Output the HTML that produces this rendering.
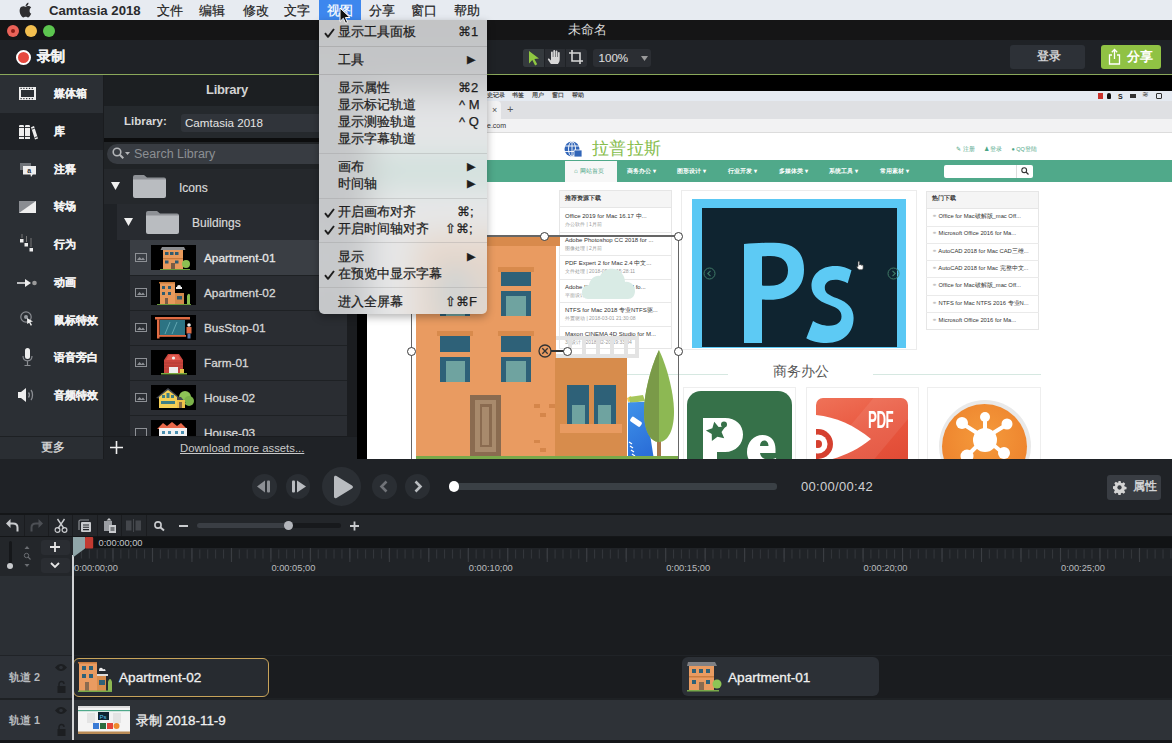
<!DOCTYPE html>
<html><head><meta charset="utf-8">
<style>
*{margin:0;padding:0;box-sizing:border-box}
html,body{width:1172px;height:743px;overflow:hidden;background:#1b1e21;font-family:"Liberation Sans",sans-serif;position:relative}
.a{position:absolute}
.t{position:absolute;white-space:nowrap;line-height:1}
svg{position:absolute;overflow:visible}
</style></head><body>

<!-- ============ mac menubar ============ -->
<div class="a" style="left:0;top:0;width:1172px;height:20px;background:#e7ebf1"></div>
<svg style="left:19px;top:3px" width="13" height="14" viewBox="0 0 13 14"><path fill="#2f2f31" d="M10.6 7.4c0-1.8 1.5-2.7 1.6-2.8-.9-1.3-2.2-1.4-2.7-1.5-1.1-.1-2.2.7-2.8.7-.6 0-1.5-.6-2.4-.6C3 3.2 1.8 3.9 1.2 5.1-.1 7.4.9 10.8 2.1 12.6c.6.9 1.3 1.8 2.3 1.8.9 0 1.2-.6 2.3-.6s1.4.6 2.3.6c1 0 1.6-.9 2.2-1.8.7-1 1-2 1-2.1-.1 0-2-.7-1.6-3.1zM8.8 2c.5-.6.8-1.4.7-2.2-.7 0-1.6.5-2.1 1.1-.5.5-.9 1.4-.8 2.1.8.1 1.7-.4 2.2-1z"/></svg>
<div class="t" style="left:49px;top:4px;font-size:13.2px;font-weight:bold;color:#2a2a2c">Camtasia 2018</div>
<div class="t" style="left:157px;top:3.7px;font-size:13px;color:#222;-webkit-text-stroke:0.2px #222">文件</div>
<div class="t" style="left:199px;top:3.7px;font-size:13px;color:#222;-webkit-text-stroke:0.2px #222">编辑</div>
<div class="t" style="left:242.5px;top:3.7px;font-size:13px;color:#222;-webkit-text-stroke:0.2px #222">修改</div>
<div class="t" style="left:284px;top:3.7px;font-size:13px;color:#222;-webkit-text-stroke:0.2px #222">文字</div>
<div class="a" style="left:319px;top:0;width:42px;height:20px;background:#3d87ee"></div>
<div class="t" style="left:326.5px;top:3.7px;font-size:13px;color:#fff;-webkit-text-stroke:0.2px #fff">视图</div>
<div class="t" style="left:369px;top:3.7px;font-size:13px;color:#222;-webkit-text-stroke:0.2px #222">分享</div>
<div class="t" style="left:411px;top:3.7px;font-size:13px;color:#222;-webkit-text-stroke:0.2px #222">窗口</div>
<div class="t" style="left:454px;top:3.7px;font-size:13px;color:#222;-webkit-text-stroke:0.2px #222">帮助</div>

<!-- ============ title bar ============ -->
<div class="a" style="left:0;top:20px;width:1172px;height:20px;background:#151516"></div>
<div class="a" style="left:7px;top:25px;width:12px;height:12px;border-radius:50%;background:#ea6258"></div>
<div class="a" style="left:11px;top:29px;width:4px;height:4px;border-radius:50%;background:#8c1d16"></div>
<div class="a" style="left:25px;top:25px;width:12px;height:12px;border-radius:50%;background:#f3bf4f"></div>
<div class="a" style="left:43px;top:25px;width:12px;height:12px;border-radius:50%;background:#5cc54f"></div>
<div class="t" style="left:568px;top:24px;font-size:12.5px;color:#d9d9d9">未命名</div>

<!-- ============ toolbar ============ -->
<div class="a" style="left:0;top:40px;width:1172px;height:34px;background:#1f2226"></div>
<div class="a" style="left:16px;top:50px;width:15px;height:15px;border-radius:50%;background:#e6493f;border:2px solid #fff"></div>
<div class="t" style="left:37px;top:50px;font-size:13.5px;font-weight:bold;color:#f2f2f2;-webkit-text-stroke:0.3px #f2f2f2">录制</div>

<div class="a" style="left:523px;top:49px;width:64px;height:18px;border-radius:3px;background:#2b2e33"></div>
<div class="a" style="left:523px;top:49px;width:21px;height:18px;border-radius:3px 0 0 3px;background:#353a3e"></div><div class="a" style="left:544px;top:49px;width:1px;height:18px;background:#1f2226"></div><div class="a" style="left:565px;top:49px;width:1px;height:18px;background:#1f2226"></div>
<svg style="left:527px;top:50px" width="14" height="16" viewBox="0 0 14 16"><path fill="#8fc741" d="M2 1l10 7.5-4.6.6 2.8 5.2-2.1 1.1-2.8-5.3L2 13.5z"/></svg>
<svg style="left:547px;top:49px" width="16" height="17" viewBox="0 0 16 17"><path fill="#d7d7d7" d="M4 15c-1.2-1.6-3-4.3-3-4.3-.5-.8.6-1.6 1.3-.9L4 11.5V3.6c0-.6.4-1 .9-1s.9.4.9 1V8h.5V2c0-.6.4-1 .9-1s.9.4.9 1v6h.5V2.6c0-.6.4-1 .9-1s.9.4.9 1V8h.5V4c0-.6.4-1 .9-1s.9.4.9 1v6.5c0 2-.8 3.4-1.8 4.5z"/></svg>
<svg style="left:568px;top:49px" width="16" height="17" viewBox="0 0 16 17"><path fill="none" stroke="#d7d7d7" stroke-width="1.6" d="M4 1v11h11M1 4h11v11"/></svg>
<div class="a" style="left:593px;top:49px;width:58px;height:18px;border-radius:3px;background:#2b2e33"></div>
<div class="t" style="left:598.5px;top:52px;font-size:11.6px;color:#d8d8d8;-webkit-text-stroke:0.15px #d8d8d8">100%</div>
<svg style="left:641px;top:55.5px" width="7" height="5" viewBox="0 0 7 5"><path fill="#9a9a9a" d="M0 0h7L3.5 5z"/></svg>

<div class="a" style="left:1010px;top:45px;width:75px;height:24px;border-radius:3px;background:#2d3137"></div>
<div class="t" style="left:1036.5px;top:51px;font-size:11.5px;font-weight:bold;color:#cfd0d2">登录</div>
<div class="a" style="left:1101px;top:45px;width:60px;height:24px;border-radius:3px;background:#90c244"></div>
<svg style="left:1108px;top:48px" width="13" height="17" viewBox="0 0 13 17"><path fill="none" stroke="#fff" stroke-width="1.3" d="M4 7H1.5v9h10V7H9M6.5 11V1.5M3.8 4.2l2.7-2.7 2.7 2.7"/></svg>
<div class="t" style="left:1126.5px;top:50px;font-size:13.3px;font-weight:bold;color:#fff">分享</div>
<div class="a" style="left:0;top:74px;width:1172px;height:1px;background:#8aa85a"></div>

<!-- ============ SIDEBAR ============ -->
<div class="a" style="left:0;top:75px;width:104px;height:361px;background:#2b2f34"></div>
<div class="a" style="left:0;top:113px;width:103px;height:37px;background:#1f2226"></div>
<div class="a" style="left:0;top:436px;width:104px;height:23px;background:#2a2e33;border-top:1px solid #1d2023"></div>
<div class="a" style="left:103px;top:75px;width:1px;height:384px;background:#1a1c1f"></div>
<div class="t" style="left:40.5px;top:441.5px;font-size:11.5px;color:#dcdcdc;-webkit-text-stroke:0.35px #dcdcdc">更多</div>
<!-- icons -->
<svg style="left:19px;top:87px" width="17" height="13" viewBox="0 0 17 13"><rect x="0" y="0" width="17" height="13" fill="#eee"/><rect x="2" y="3" width="13" height="7" fill="#2b2f34"/><g fill="#2b2f34"><rect x="1.5" y="0.8" width="1.2" height="1.2"/><rect x="4.3" y="0.8" width="1.2" height="1.2"/><rect x="7.1" y="0.8" width="1.2" height="1.2"/><rect x="9.9" y="0.8" width="1.2" height="1.2"/><rect x="12.7" y="0.8" width="1.2" height="1.2"/><rect x="1.5" y="11" width="1.2" height="1.2"/><rect x="4.3" y="11" width="1.2" height="1.2"/><rect x="7.1" y="11" width="1.2" height="1.2"/><rect x="9.9" y="11" width="1.2" height="1.2"/><rect x="12.7" y="11" width="1.2" height="1.2"/></g></svg>
<svg style="left:18px;top:124px" width="20" height="16" viewBox="0 0 20 16"><path fill="#eee" d="M1 2.2Q1 1 2.2 1h2.6Q6 1 6 2.2V15H1zM7 2.2Q7 1 8.2 1h2.6Q12 1 12 2.2V15H7zM13 3.2l3-1.2 4 12.4-3 1.2z"/><path stroke="#1f2226" stroke-width="0.9" d="M1 3.5h5M1 12.5h5M7 3.5h5M7 12.5h5M13.8 5.2l3-1M16.6 13.6l3-1"/></svg>
<svg style="left:19px;top:162px" width="18" height="16" viewBox="0 0 18 16"><rect x="1" y="1" width="11" height="7" fill="#6f7378"/><path fill="#eee" d="M4 4h13v8.5h-3.2l-1.8 2.5-.5-2.5H4z"/><text x="8.3" y="11" font-size="7" font-family="Liberation Sans" font-weight="bold" fill="#2b2f34">a</text></svg>
<svg style="left:19px;top:201px" width="17" height="12" viewBox="0 0 17 12"><path fill="#eee" d="M0 0h17v12H0z"/><path fill="#8a8d92" d="M0 0h17L0 12z"/></svg>
<svg style="left:20px;top:234px" width="14" height="20" viewBox="0 0 14 20"><path fill="#eee" d="M0 5h3.5v3.5H0zM4.5 9h3.5v3.5H4.5zM9.5 14h3.5v3.5H9.5z"/><path stroke="#777" stroke-width="1" d="M2 0v4M6.5 2v6M11 4v9"/></svg>
<svg style="left:17px;top:279px" width="21" height="8" viewBox="0 0 21 8"><path fill="#eee" d="M0 3.2h8V0l6 4-6 4V4.8H0z"/><circle cx="17.5" cy="4" r="2.3" fill="#9a9a9a"/></svg>
<svg style="left:20px;top:311px" width="14" height="16" viewBox="0 0 14 16"><circle cx="6" cy="6" r="5.2" fill="none" stroke="#8a8d92" stroke-width="1.2"/><circle cx="6" cy="6" r="2" fill="#9a9da2"/><path fill="#eee" d="M7 7l6 3.5-2.6.5 1.6 3-1.2.7-1.6-3L7.2 13z"/></svg>
<svg style="left:22px;top:348px" width="11" height="19" viewBox="0 0 11 19"><rect x="3" y="0" width="5" height="11" rx="2.5" fill="#eee"/><path fill="none" stroke="#8a8d92" stroke-width="1.2" d="M1 8c0 3 2 4.8 4.5 4.8S10 11 10 8M5.5 13v4M2.5 17.5h6"/></svg>
<svg style="left:17px;top:387px" width="19" height="16" viewBox="0 0 19 16"><path fill="#eee" d="M1 5h3l5-4v14l-5-4H1z"/><path fill="none" stroke="#8a8d92" stroke-width="1.3" d="M11.5 5.5c1 1.3 1 3.7 0 5M14 3c2 2.5 2 7.5 0 10"/></svg>
<div class="t" style="left:54px;top:87.5px;font-size:11.2px;font-weight:bold;color:#f2f2f2;-webkit-text-stroke:0.2px #f2f2f2">媒体箱</div>
<div class="t" style="left:54px;top:125.5px;font-size:11.2px;font-weight:bold;color:#f2f2f2;-webkit-text-stroke:0.2px #f2f2f2">库</div>
<div class="t" style="left:54px;top:163.5px;font-size:11.2px;font-weight:bold;color:#f2f2f2;-webkit-text-stroke:0.2px #f2f2f2">注释</div>
<div class="t" style="left:54px;top:200.5px;font-size:11.2px;font-weight:bold;color:#f2f2f2;-webkit-text-stroke:0.2px #f2f2f2">转场</div>
<div class="t" style="left:54px;top:238.5px;font-size:11.2px;font-weight:bold;color:#f2f2f2;-webkit-text-stroke:0.2px #f2f2f2">行为</div>
<div class="t" style="left:54px;top:276.5px;font-size:11.2px;font-weight:bold;color:#f2f2f2;-webkit-text-stroke:0.2px #f2f2f2">动画</div>
<div class="t" style="left:54px;top:314.5px;font-size:11.2px;font-weight:bold;color:#f2f2f2;-webkit-text-stroke:0.2px #f2f2f2">鼠标特效</div>
<div class="t" style="left:54px;top:351.5px;font-size:11.2px;font-weight:bold;color:#f2f2f2;-webkit-text-stroke:0.2px #f2f2f2">语音旁白</div>
<div class="t" style="left:54px;top:389.5px;font-size:11.2px;font-weight:bold;color:#f2f2f2;-webkit-text-stroke:0.2px #f2f2f2">音频特效</div>

<!-- ============ LIBRARY ============ -->
<div class="a" style="left:104px;top:75px;width:253px;height:31px;background:#1c1f22"></div>
<div class="t" style="left:206px;top:83px;font-size:13px;font-weight:bold;color:#d2d2d2;letter-spacing:-0.3px">Library</div>
<div class="a" style="left:104px;top:106px;width:253px;height:32px;background:#25292d"></div>
<div class="t" style="left:124px;top:116px;font-size:11.5px;font-weight:bold;color:#d8d8d8">Library:</div>
<div class="a" style="left:181px;top:114px;width:170px;height:18px;border-radius:3px;background:#30343a"></div>
<div class="t" style="left:185px;top:117px;font-size:11.6px;color:#e4e4e4">Camtasia 2018</div>
<div class="a" style="left:104px;top:138px;width:253px;height:4px;background:#0c0d0e"></div>
<div class="a" style="left:104px;top:142px;width:253px;height:27px;background:#202326"></div>
<div class="a" style="left:107px;top:144px;width:246px;height:20px;border-radius:10px;background:#383c42"></div>
<svg style="left:112px;top:147px" width="20" height="13" viewBox="0 0 20 13"><circle cx="5" cy="5" r="3.8" fill="none" stroke="#b4b6b9" stroke-width="1.6"/><path stroke="#b4b6b9" stroke-width="2" d="M7.8 7.8l3.5 3.5"/><path fill="#b4b6b9" d="M13 5h5l-2.5 3z"/></svg>
<div class="t" style="left:134px;top:148px;font-size:12.5px;color:#8c8f93">Search Library</div>
<!-- Icons row -->
<div class="a" style="left:104px;top:169px;width:253px;height:35px;background:#25282c"></div>
<svg style="left:111px;top:182px" width="9" height="8" viewBox="0 0 9 8"><path fill="#f0f0f0" d="M0 0h9L4.5 8z"/></svg>
<svg style="left:133px;top:175px" width="33" height="23" viewBox="0 0 33 23"><path fill="#8e9196" d="M0 2a2 2 0 012-2h9l3 2.5h17a2 2 0 012 2V6H0z"/><path fill="#b9bcc0" d="M0 4.5h33V21a2 2 0 01-2 2H2a2 2 0 01-2-2z"/></svg>
<div class="t" style="left:179px;top:181.5px;font-size:12px;color:#d8d8d8;-webkit-text-stroke:0.2px #d8d8d8">Icons</div>
<!-- Buildings row -->
<div class="a" style="left:104px;top:204px;width:13px;height:232px;background:#1f2226"></div>
<div class="a" style="left:117px;top:204px;width:240px;height:36px;background:#282b30"></div>
<svg style="left:124px;top:218px" width="9" height="8" viewBox="0 0 9 8"><path fill="#f0f0f0" d="M0 0h9L4.5 8z"/></svg>
<svg style="left:146px;top:211px" width="33" height="23" viewBox="0 0 33 23"><path fill="#8e9196" d="M0 2a2 2 0 012-2h9l3 2.5h17a2 2 0 012 2V6H0z"/><path fill="#b9bcc0" d="M0 4.5h33V21a2 2 0 01-2 2H2a2 2 0 01-2-2z"/></svg>
<div class="t" style="left:192px;top:216.5px;font-size:12px;color:#d8d8d8;-webkit-text-stroke:0.2px #d8d8d8">Buildings</div>
<div class="a" style="left:117px;top:240px;width:13px;height:196px;background:#1f2226"></div>
<div class="a" style="left:347px;top:240px;width:10px;height:196px;background:#1b1d20"></div>
<!-- list rows -->
<div class="a" style="left:130px;top:240px;width:217px;height:35px;background:#3a3e44"></div>
<div class="a" style="left:130px;top:275px;width:217px;height:161px;background:#2a2d32"></div>
<div class="a" style="left:130px;top:275px;width:217px;height:1px;background:#1e2124"></div>
<div class="a" style="left:130px;top:310px;width:217px;height:1px;background:#1e2124"></div>
<div class="a" style="left:130px;top:345px;width:217px;height:1px;background:#1e2124"></div>
<div class="a" style="left:130px;top:380px;width:217px;height:1px;background:#1e2124"></div>
<div class="a" style="left:130px;top:415px;width:217px;height:1px;background:#1e2124"></div>
<!-- small image icons -->
<svg style="left:135px;top:253px" width="12" height="9" viewBox="0 0 12 9"><rect x="0.5" y="0.5" width="11" height="8" fill="none" stroke="#8d9095"/><path fill="#8d9095" d="M2 7l2.5-3 2 2 1.5-1.5L10 7z"/></svg>
<svg style="left:135px;top:288px" width="12" height="9" viewBox="0 0 12 9"><rect x="0.5" y="0.5" width="11" height="8" fill="none" stroke="#8d9095"/><path fill="#8d9095" d="M2 7l2.5-3 2 2 1.5-1.5L10 7z"/></svg>
<svg style="left:135px;top:323px" width="12" height="9" viewBox="0 0 12 9"><rect x="0.5" y="0.5" width="11" height="8" fill="none" stroke="#8d9095"/><path fill="#8d9095" d="M2 7l2.5-3 2 2 1.5-1.5L10 7z"/></svg>
<svg style="left:135px;top:358px" width="12" height="9" viewBox="0 0 12 9"><rect x="0.5" y="0.5" width="11" height="8" fill="none" stroke="#8d9095"/><path fill="#8d9095" d="M2 7l2.5-3 2 2 1.5-1.5L10 7z"/></svg>
<svg style="left:135px;top:393px" width="12" height="9" viewBox="0 0 12 9"><rect x="0.5" y="0.5" width="11" height="8" fill="none" stroke="#8d9095"/><path fill="#8d9095" d="M2 7l2.5-3 2 2 1.5-1.5L10 7z"/></svg>
<svg style="left:135px;top:428px" width="12" height="8" viewBox="0 0 12 8"><rect x="0.5" y="0.5" width="11" height="8" fill="none" stroke="#8d9095"/></svg>
<!-- thumbs -->
<svg style="left:151px;top:245px" width="45" height="25" viewBox="0 0 45 25"><rect width="45" height="25" fill="#000"/><path fill="#8b8d90" d="M11 2h22l1.5 3h-25z"/><rect x="12" y="5" width="20" height="19" fill="#e89a5c"/><rect x="12" y="13" width="20" height="1.2" fill="#c77a3c"/><g fill="#2f5b70"><rect x="14" y="7" width="3.5" height="3"/><rect x="19" y="7" width="3.5" height="3"/><rect x="24" y="7" width="3.5" height="3"/><rect x="14" y="15.5" width="3.5" height="3"/><rect x="24" y="15.5" width="3.5" height="3"/></g><rect x="20" y="18" width="4" height="6" fill="#7a5c45"/><circle cx="35" cy="19" r="4" fill="#8cbf52"/><rect x="9" y="24" width="30" height="1" fill="#6a9b3a"/></svg>
<svg style="left:151px;top:280px" width="45" height="25" viewBox="0 0 45 25"><rect width="45" height="25" fill="#000"/><rect x="9" y="3" width="15" height="21" fill="#e89a5c"/><rect x="8" y="2" width="16" height="1.5" fill="#c77a3c"/><g fill="#2f5b70"><rect x="11" y="6" width="3" height="3"/><rect x="17" y="6" width="3" height="3"/><rect x="11" y="12" width="3" height="3"/><rect x="17" y="12" width="3" height="3"/></g><rect x="14" y="18" width="3" height="6" fill="#7a5c45"/><rect x="24" y="13" width="9" height="11" fill="#d38a4c"/><rect x="26" y="16" width="5" height="3.5" fill="#2f5b70"/><path fill="#eee" d="M26 7a2 2 0 014 0h1v2h-6V7z"/><path fill="#8cbf52" d="M36 24V16c1-3 3-3 3 0v8z"/><rect x="6" y="24" width="34" height="1" fill="#6a9b3a"/></svg>
<svg style="left:151px;top:315px" width="45" height="25" viewBox="0 0 45 25"><rect width="45" height="25" fill="#000"/><rect x="4" y="2" width="35" height="2.5" fill="#e06c44"/><rect x="6" y="4.5" width="2.5" height="19" fill="#e06c44"/><rect x="9" y="5" width="25" height="15" fill="#2c7383"/><path stroke="#6fb3bd" stroke-width="0.8" d="M14 19l5-12M21 19l5-12"/><rect x="7" y="20" width="28" height="1.8" fill="#e06c44"/><circle cx="38" cy="10" r="1.8" fill="#eee"/><rect x="35.5" y="12" width="5" height="6.5" fill="#e06c44"/><rect x="36.5" y="18.5" width="3" height="5" fill="#5577aa"/></svg>
<svg style="left:151px;top:350px" width="45" height="25" viewBox="0 0 45 25"><rect width="45" height="25" fill="#000"/><path fill="#c9453d" d="M13 10l4-6h11l4 6v13H13z"/><path fill="#e25a4e" d="M15 10l3-5h9l3 5z"/><circle cx="22.5" cy="8" r="1.6" fill="#eee"/><g stroke="#a33a33" stroke-width="0.6"><path d="M13 13h19M13 16h19M13 19h19"/></g><rect x="18" y="17" width="9" height="6" fill="#eee"/><rect x="29" y="19" width="4" height="4" fill="#e8c34a"/><rect x="10" y="23" width="26" height="1.5" fill="#7aaa42"/></svg>
<svg style="left:151px;top:385px" width="45" height="25" viewBox="0 0 45 25"><rect width="45" height="25" fill="#000"/><circle cx="34" cy="12" r="6" fill="#8ec456"/><circle cx="38" cy="16" r="5" fill="#7cb34a"/><path fill="#454a52" d="M5 13L17 3l11 9h2l5 6h-3z"/><path fill="#f4cf55" d="M8 12l9-7 9 7v11H8z"/><rect x="26" y="15" width="8" height="8" fill="#f0c24a"/><g fill="#3f7f86"><rect x="11" y="10" width="3" height="3"/><rect x="15.5" y="8" width="3" height="5"/><rect x="20" y="10" width="3" height="3"/><rect x="10" y="16" width="14" height="3"/></g><rect x="28" y="17" width="3" height="6" fill="#876c48"/></svg>
<svg style="left:151px;top:420px" width="45" height="16" viewBox="0 0 45 16"><rect width="45" height="16" fill="#000"/><path fill="#e8684a" d="M6 9l6-6 4 3 5-4 5 4 4-3 6 6z"/><rect x="8" y="8" width="28" height="8" fill="#f2f2f2"/><g fill="#4a8fb0"><rect x="11" y="11" width="3" height="3"/><rect x="17" y="11" width="3" height="3"/><rect x="24" y="11" width="3" height="3"/><rect x="30" y="11" width="3" height="3"/></g></svg>
<div class="t" style="left:204px;top:252.5px;font-size:11.8px;color:#e6e6e6;-webkit-text-stroke:0.3px #e6e6e6">Apartment-01</div>
<div class="t" style="left:204px;top:287.5px;font-size:11.8px;color:#d6d6d6;-webkit-text-stroke:0.3px #d6d6d6">Apartment-02</div>
<div class="t" style="left:204px;top:322.5px;font-size:11.8px;color:#d6d6d6;-webkit-text-stroke:0.3px #d6d6d6">BusStop-01</div>
<div class="t" style="left:204px;top:357.5px;font-size:11.8px;color:#d6d6d6;-webkit-text-stroke:0.3px #d6d6d6">Farm-01</div>
<div class="t" style="left:204px;top:392.5px;font-size:11.8px;color:#d6d6d6;-webkit-text-stroke:0.3px #d6d6d6">House-02</div>
<div class="a" style="left:204px;top:426px;height:10px;width:80px;overflow:hidden"><div class="t" style="left:0;top:1.5px;font-size:11.8px;color:#d6d6d6;-webkit-text-stroke:0.3px #d6d6d6">House-03</div></div>
<!-- bottom bar -->
<div class="a" style="left:104px;top:436px;width:253px;height:23px;background:#1f2226;border-top:1px solid #1a1c1f"></div>
<svg style="left:110px;top:441px" width="13" height="13" viewBox="0 0 13 13"><path stroke="#eee" stroke-width="1.6" d="M6.5 0v13M0 6.5h13"/></svg>
<div class="t" style="left:180px;top:442.5px;font-size:11.3px;color:#c9c9c9;text-decoration:underline">Download more assets...</div>

<!-- LIBRARY -->
<!-- ============ CANVAS ============ -->
<div class="a" style="left:357px;top:75px;width:815px;height:384px;background:#000"></div>
<div class="a" style="left:367px;top:91px;width:805px;height:368px;background:#fff;overflow:hidden">
 <!-- inner coords: x-367, y-91 -->
 <div class="a" style="left:0;top:0;width:805px;height:9.5px;background:#e5eaf1"></div>
 <div class="t" style="left:120px;top:2px;font-size:5.8px;color:#333;-webkit-text-stroke:0.15px #333">史记录</div>
 <div class="t" style="left:145px;top:2px;font-size:5.8px;color:#333;-webkit-text-stroke:0.15px #333">书签</div>
 <div class="t" style="left:165px;top:2px;font-size:5.8px;color:#333;-webkit-text-stroke:0.15px #333">用户</div>
 <div class="t" style="left:184.70000000000005px;top:2px;font-size:5.8px;color:#333;-webkit-text-stroke:0.15px #333">窗口</div>
 <div class="t" style="left:204.60000000000002px;top:2px;font-size:5.8px;color:#333;-webkit-text-stroke:0.15px #333">帮助</div>

 <div class="a" style="left:731px;top:2px;width:5px;height:6px;background:#c8302a"></div>
 <div class="a" style="left:740px;top:2px;width:4px;height:6px;border-radius:2px 2px 1px 1px;background:#111"></div>
 <div class="t" style="left:751px;top:1.5px;font-size:7px;font-weight:bold;color:#222">S</div>
 <div class="a" style="left:763px;top:3px;width:6px;height:4px;background:#333"></div>
 <div class="t" style="left:775px;top:0px;font-size:8px;color:#444">≋</div>
 <div class="a" style="left:789px;top:2px;width:6px;height:6px;border:1.2px solid #333;border-radius:1px"></div>
 <div class="a" style="left:0;top:9.5px;width:805px;height:18px;background:#dfe0e3"></div>
 <div class="a" style="left:0;top:10px;width:134px;height:17.5px;background:#f2f2f3;border-radius:0 4px 0 0"></div>
 <div class="t" style="left:125px;top:14.5px;font-size:9px;color:#555">×</div>
 <div class="t" style="left:140px;top:13px;font-size:11px;color:#555">+</div>
 <div class="a" style="left:0;top:27.5px;width:805px;height:13px;background:#f2f2f3"></div>
 <div class="t" style="left:120px;top:30.5px;font-size:7px;color:#333">e.com</div>
 <div class="a" style="left:0;top:40.5px;width:805px;height:1.5px;background:#dcdcdc"></div>

 <!-- logo -->
 <svg style="left:197px;top:50px" width="18" height="16" viewBox="0 0 18 16"><circle cx="8" cy="8" r="7.5" fill="#3165b8"/><g stroke="#fff" stroke-width="0.9" fill="none"><ellipse cx="8" cy="8" rx="3.5" ry="7.5"/><path d="M0.5 5h15M0.5 10.5h15M8 0.5v15"/></g><rect x="10" y="9" width="8" height="7" fill="#3165b8" stroke="#fff" stroke-width="0.8"/></svg>
 <div class="t" style="left:225px;top:48.5px;font-size:17px;color:#86bd4c;font-family:'Liberation Serif',serif;letter-spacing:0.3px">拉普拉斯</div>
 <div class="t" style="left:589px;top:56px;font-size:5.5px;color:#4aa585">✎ 注册&nbsp;&nbsp;&nbsp;&nbsp;&nbsp;&nbsp;♟ 登录&nbsp;&nbsp;&nbsp;&nbsp;&nbsp;&nbsp;● QQ登陆</div>

 <!-- nav -->
 <div class="a" style="left:0;top:68.5px;width:805px;height:22px;background:#50a98a"></div>
 <div class="a" style="left:198px;top:70px;width:52px;height:20.5px;background:#f7f7f7"></div>
 <div class="t" style="left:207px;top:76.5px;font-size:6.3px;color:#4aa585">⌂ 网站首页</div>
 <div class="t" style="left:260px;top:76.5px;font-size:6.3px;font-weight:bold;color:#fff">商务办公 ▾</div>
 <div class="t" style="left:310px;top:76.5px;font-size:6.3px;font-weight:bold;color:#fff">图形设计 ▾</div>
 <div class="t" style="left:361px;top:76.5px;font-size:6.3px;font-weight:bold;color:#fff">行业开发 ▾</div>
 <div class="t" style="left:412px;top:76.5px;font-size:6.3px;font-weight:bold;color:#fff">多媒体类 ▾</div>
 <div class="t" style="left:462px;top:76.5px;font-size:6.3px;font-weight:bold;color:#fff">系统工具 ▾</div>
 <div class="t" style="left:513px;top:76.5px;font-size:6.3px;font-weight:bold;color:#fff">常用素材 ▾</div>
 <div class="a" style="left:577px;top:73.5px;width:89px;height:13px;background:#fff;border-radius:2px"></div>
 <div class="a" style="left:649px;top:73.5px;width:1px;height:13px;background:#ddd"></div>
 <svg style="left:654px;top:76px" width="8" height="8" viewBox="0 0 8 8"><circle cx="3.2" cy="3.2" r="2.4" fill="none" stroke="#333" stroke-width="1.1"/><path stroke="#333" stroke-width="1.3" d="M5 5l2.5 2.5"/></svg>

 <!-- 推荐资源下载 -->
 <div class="a" style="left:192px;top:99px;width:113px;height:159px;border:1px solid #e6e6e6;background:#fff"></div>
 <div class="a" style="left:192px;top:99px;width:113px;height:18px;background:#f5f5f5;border:1px solid #e6e6e6"></div>
 <div class="t" style="left:198px;top:105px;font-size:5.8px;font-weight:bold;color:#333">推荐资源下载</div>
 <div class="a" style="left:192px;top:140.5px;width:113px;height:1px;background:#e8e8e8"></div>
 <div class="a" style="left:192px;top:164px;width:113px;height:1px;background:#e8e8e8"></div>
 <div class="a" style="left:192px;top:187.5px;width:113px;height:1px;background:#e8e8e8"></div>
 <div class="a" style="left:192px;top:211px;width:113px;height:1px;background:#e8e8e8"></div>
 <div class="a" style="left:192px;top:234.5px;width:113px;height:1px;background:#e8e8e8"></div>
 <div class="t" style="left:198px;top:122px;font-size:6px;color:#333">Office 2019 for Mac 16.17 中...</div>
 <div class="t" style="left:198px;top:131px;font-size:5px;color:#9a9a9a">办公软件 | 1月前</div>
 <div class="t" style="left:198px;top:145.5px;font-size:6px;color:#333">Adobe Photoshop CC 2018 for ...</div>
 <div class="t" style="left:198px;top:154.5px;font-size:5px;color:#9a9a9a">图像处理 | 2月前</div>
 <div class="t" style="left:198px;top:169px;font-size:6px;color:#333">PDF Expert 2 for Mac 2.4 中文...</div>
 <div class="t" style="left:198px;top:178px;font-size:5px;color:#9a9a9a">文件处理 | 2018-05-03 15:28:11</div>
 <div class="t" style="left:198px;top:192.5px;font-size:6px;color:#333">Adobe Illustrator CC 2018 fo...</div>
 <div class="t" style="left:198px;top:201.5px;font-size:5px;color:#9a9a9a">平面设计 | 2018-04-19 12</div>
 <div class="t" style="left:198px;top:216px;font-size:6px;color:#333">NTFS for Mac 2018 专业NTFS驱...</div>
 <div class="t" style="left:198px;top:225px;font-size:5px;color:#9a9a9a">外置驱动 | 2018-03-01 21:30:08</div>
 <div class="t" style="left:198px;top:239.5px;font-size:6px;color:#333">Maxon CINEMA 4D Studio for M...</div>
 <div class="t" style="left:198px;top:248.5px;font-size:5px;color:#9a9a9a">3D设计 | 2018-02-20 19:33:04</div>

 <!-- PS carousel -->
 <div class="a" style="left:313.5px;top:99px;width:236px;height:160px;border:1px solid #ececec"></div>
 <div class="a" style="left:325px;top:108px;width:214px;height:148.5px;background:#5ac8f4"></div>
 <div class="a" style="left:334.5px;top:116.5px;width:195px;height:139.5px;background:#0f2430"></div>
 <svg style="left:374px;top:152px" width="116" height="102" viewBox="0 0 116 102"><path fill="#5dcaf4" d="M3 1c10-1 22-1.3 30-1.3 22 0 30 11 30 27 0 20-15 30-34 30-3.5 0-5.5 0-8-.2V100H3zM21 42.5c2 .2 4 .3 7.5.3 13 0 18.5-6 18.5-15.5C47 18 41 13 29.5 13c-4 0-7 .2-8.5.5z"/><path fill="#5dcaf4" d="M72 78c3.5 2.3 10 4.8 16 4.8 8.5 0 12.5-4 12.5-9.2 0-5.6-3.4-8.5-12-11.5C76 57.7 70.5 51 70.5 43c0-11 9-20 23.5-20 6.8 0 12.8 2 16.5 4.3l-3.8 13c-2.6-1.6-7.5-3.6-12.5-3.6-6.8 0-10.4 3.4-10.4 8 0 5 3.6 7.3 12.3 10.6 11.2 4.2 16.5 10.6 16.5 19.8C112.6 89 102.9 100 85.5 100c-8 0-15.4-2-20.2-4.8z"/></svg>
 <svg style="left:336px;top:176px" width="13" height="13" viewBox="0 0 13 13"><circle cx="6.5" cy="6.5" r="5.5" fill="none" stroke="#3f7a66" stroke-width="1"/><path fill="none" stroke="#3f7a66" stroke-width="1.2" d="M7.5 3.8L4.8 6.5l2.7 2.7"/></svg>
 <svg style="left:520px;top:176px" width="13" height="13" viewBox="0 0 13 13"><circle cx="6.5" cy="6.5" r="5.5" fill="none" stroke="#3f7a66" stroke-width="1"/><path fill="none" stroke="#3f7a66" stroke-width="1.2" d="M5.5 3.8l2.7 2.7-2.7 2.7"/></svg>
 <svg style="left:489px;top:170px" width="8" height="9" viewBox="0 0 8 9"><path fill="#fff" stroke="#333" stroke-width="0.7" d="M2 4V1a.8.8 0 011.6 0v3h.5a.8.8 0 011.5.3h.2a.8.8 0 011.4.5V7c0 1-1 1.8-2 1.8H3.5C2.7 8.8 1 7 .8 6c-.2-.7.5-1 1.2-.3z"/></svg>

 <!-- 热门下载 -->
 <div class="a" style="left:558.5px;top:99.5px;width:113px;height:139px;border:1px solid #e6e6e6;background:#fff"></div>
 <div class="a" style="left:558.5px;top:99.5px;width:113px;height:18px;background:#f5f5f5;border:1px solid #e6e6e6"></div>
 <div class="t" style="left:565px;top:105px;font-size:5.8px;font-weight:bold;color:#333">热门下载</div>
 <div class="a" style="left:558.5px;top:134.5px;width:113px;height:1px;background:#eaeaea"></div>
 <div class="a" style="left:558.5px;top:151.8px;width:113px;height:1px;background:#eaeaea"></div>
 <div class="a" style="left:558.5px;top:169px;width:113px;height:1px;background:#eaeaea"></div>
 <div class="a" style="left:558.5px;top:186.3px;width:113px;height:1px;background:#eaeaea"></div>
 <div class="a" style="left:558.5px;top:203.6px;width:113px;height:1px;background:#eaeaea"></div>
 <div class="a" style="left:558.5px;top:221px;width:113px;height:1px;background:#eaeaea"></div>
 <div class="t" style="left:565px;top:123px;font-size:5.8px;color:#333"><span style="color:#bbb">⚭</span> Office for Mac破解版_mac Off...</div>
 <div class="t" style="left:565px;top:140px;font-size:5.8px;color:#333"><span style="color:#bbb">⚭</span> Microsoft Office 2016 for Ma...</div>
 <div class="t" style="left:565px;top:157.5px;font-size:5.8px;color:#333"><span style="color:#bbb">⚭</span> AutoCAD 2018 for Mac CAD三维...</div>
 <div class="t" style="left:565px;top:175px;font-size:5.8px;color:#333"><span style="color:#bbb">⚭</span> AutoCAD 2018 for Mac 完整中文...</div>
 <div class="t" style="left:565px;top:192px;font-size:5.8px;color:#333"><span style="color:#bbb">⚭</span> Office for Mac破解版_mac Off...</div>
 <div class="t" style="left:565px;top:209.5px;font-size:5.8px;color:#333"><span style="color:#bbb">⚭</span> NTFS for Mac NTFS 2016 专业N...</div>
 <div class="t" style="left:565px;top:227px;font-size:5.8px;color:#333"><span style="color:#bbb">⚭</span> Microsoft Office 2016 for Ma...</div>

 <!-- 商务办公 -->
 <div class="a" style="left:195px;top:282.5px;width:166px;height:1.5px;background:#d6e8e1"></div>
 <div class="a" style="left:506px;top:282.5px;width:168px;height:1.5px;background:#d6e8e1"></div>
 <div class="t" style="left:406px;top:274px;font-size:13.5px;color:#555">商务办公</div>
 <div class="a" style="left:316px;top:296px;width:113px;height:80px;border:1px solid #eee"></div>
 <div class="a" style="left:438.5px;top:296px;width:113px;height:80px;border:1px solid #eee"></div>
 <div class="a" style="left:560px;top:296px;width:114px;height:80px;border:1px solid #eee"></div>
 <!-- Pe -->
 <div class="a" style="left:320px;top:300px;width:105px;height:100px;border-radius:14px;background:#367149"></div>
 <svg style="left:336px;top:326.5px" width="80" height="50" viewBox="0 0 80 50"><path fill="#fff" d="M0 0h22c11 0 18 7 18 16.5S33 34 22 34h-8v16H0z"/><path fill="#367149" d="M13 3.5l3.2 6 6.8 1-5 4.6 1.3 6.7L13 18.8l-6.3 3 1.3-6.7-5-4.6 6.8-1z" transform="rotate(-12 13 12)"/><circle cx="21" cy="6.5" r="3" fill="#367149"/><path fill="#fff" fill-rule="evenodd" d="M44 34c0-10 7-17 15.5-17 8 0 13 5.5 13 14v4H57c.7 4.5 4 6.5 8.5 6.5 3 0 5.8-.7 7.5-1.5l1.5 8.5C72 49.5 68 50.3 64 50.3 52 50.3 44 43.8 44 34zM57 28h8.5c0-3-1.5-5.5-4.2-5.5S57 25 57 28z"/></svg>
 <!-- PDF -->
 <div class="a" style="left:449px;top:307px;width:92px;height:80px;border-radius:7px;overflow:hidden;background:linear-gradient(160deg,#ef7258 0%,#e9573f 45%,#dc4631 100%)"><div class="a" style="left:30px;top:-40px;width:40px;height:160px;background:rgba(255,255,255,0.08);transform:rotate(40deg)"></div><svg style="left:0;top:15px" width="60" height="50" viewBox="0 0 60 50"><path fill="#fff" d="M0 2c20 2 38 10 55 24C38 40 20 46 0 50z"/><circle cx="2" cy="31" r="15" fill="#d5402f"/><circle cx="2" cy="31" r="9.5" fill="#fff"/><circle cx="2" cy="31" r="4" fill="#d5402f"/></svg><div class="t" style="left:51.5px;top:10.5px;font-size:14.5px;font-weight:bold;color:#fff;letter-spacing:-0.5px;transform:scaleX(0.92) scaleY(1.6);transform-origin:0 0">PDF</div></div>
 <!-- orange -->
 <div class="a" style="left:571.5px;top:309px;width:92px;height:92px;border-radius:50%;background:#e9e9e9"></div>
 <div class="a" style="left:575px;top:312.5px;width:85px;height:85px;border-radius:50%;background:radial-gradient(circle at 50% 40%,#f59b3c,#ea7a28)"></div>
 <svg style="left:583px;top:320px" width="70" height="52" viewBox="0 0 70 52"><g stroke="#fff" stroke-width="4" stroke-linecap="round"><path d="M35 27L13 13M35 27L35 6M35 27L56 14M35 27L18 44M35 27L53 42"/></g><circle cx="35" cy="29" r="12" fill="#fff"/><circle cx="12" cy="12" r="6" fill="#fff"/><circle cx="35" cy="6" r="5" fill="#fff"/><circle cx="57" cy="13" r="5.5" fill="#fff"/><circle cx="17" cy="45" r="6.5" fill="#fff"/><circle cx="54" cy="42" r="6" fill="#fff"/></svg>

 <!-- cloud -->
 <svg style="left:215px;top:177px" width="56" height="32" viewBox="0 0 56 32"><path fill="#d9ebe5" d="M6 31c-4 0-6-3-6-7s3-7 7-7c1-6 6-10 11-9 3-6 9-8 14-7 7 1 11 7 11 13 5-1 10 3 10 9 0 5-3 8-7 8z"/></svg>
 <!-- balcony railing -->
 <div class="a" style="left:188px;top:245px;width:84px;height:22px;border:4px solid #e3e3e3;border-left:none"></div>
 <div class="a" style="left:201px;top:245px;width:3.5px;height:22px;background:#e3e3e3"></div>
 <div class="a" style="left:215px;top:245px;width:3.5px;height:22px;background:#e3e3e3"></div>
 <div class="a" style="left:229px;top:245px;width:3.5px;height:22px;background:#e3e3e3"></div>
 <div class="a" style="left:243px;top:245px;width:3.5px;height:22px;background:#e3e3e3"></div>
 <div class="a" style="left:257px;top:245px;width:3.5px;height:22px;background:#e3e3e3"></div>
</div>
<div class="a" style="left:367px;top:91px;width:805px;height:368px;overflow:hidden">
 <div class="a" style="left:49px;top:145px;width:144px;height:10px;background:#d88a4c"></div>
 <div class="a" style="left:49px;top:154.5px;width:139.5px;height:214px;background:#e99b61"></div>
 <!-- row1 windows -->
 <div class="a" style="left:70px;top:176px;width:36px;height:5px;background:#d88a4c"></div>
 <div class="a" style="left:130.5px;top:176px;width:36px;height:5px;background:#d88a4c"></div>
 <div class="a" style="left:73px;top:181px;width:30px;height:14px;background:#2e6178"></div>
 <div class="a" style="left:133.5px;top:181px;width:30px;height:14px;background:#2e6178"></div>
 <div class="a" style="left:73px;top:200px;width:30px;height:25px;background:#2e6178"></div>
 <div class="a" style="left:133.5px;top:200px;width:30px;height:25px;background:#2e6178"></div>
 <div class="a" style="left:79px;top:205px;width:19px;height:20px;background:#6fa3a0"></div>
 <div class="a" style="left:139px;top:205px;width:20px;height:20px;background:#6fa3a0"></div>
 <!-- row2 windows -->
 <div class="a" style="left:70px;top:240px;width:36px;height:4.5px;background:#d88a4c"></div>
 <div class="a" style="left:130.5px;top:240px;width:36px;height:4.5px;background:#d88a4c"></div>
 <div class="a" style="left:73px;top:245px;width:30px;height:15.5px;background:#2e6178"></div>
 <div class="a" style="left:133.5px;top:245px;width:30px;height:15.5px;background:#2e6178"></div>
 <div class="a" style="left:73px;top:266px;width:30px;height:24.5px;background:#2e6178"></div>
 <div class="a" style="left:133.5px;top:266px;width:30px;height:24.5px;background:#2e6178"></div>
 <div class="a" style="left:78.5px;top:270px;width:19.5px;height:20.5px;background:#6fa3a0"></div>
 <div class="a" style="left:139px;top:270px;width:20px;height:20.5px;background:#6fa3a0"></div>
 <!-- door -->
 <div class="a" style="left:103px;top:303.5px;width:31px;height:62px;background:#8a6b50"></div>
 <div class="a" style="left:108px;top:308.5px;width:21px;height:52px;background:#a88a6c"></div>
 <div class="a" style="left:112.5px;top:313px;width:12px;height:43px;background:#8a6b50"></div>
 <div class="a" style="left:115px;top:315.5px;width:7px;height:38px;background:#a88a6c"></div>
 <!-- bricks -->
 <div class="a" style="left:167px;top:313px;width:6px;height:3.5px;background:#d5864a"></div>
 <div class="a" style="left:181.5px;top:313px;width:6px;height:3.5px;background:#d5864a"></div>
 <div class="a" style="left:173px;top:322px;width:6px;height:3.5px;background:#d5864a"></div>
 <div class="a" style="left:167px;top:348.5px;width:6px;height:3.5px;background:#d5864a"></div>
 <div class="a" style="left:173px;top:357px;width:6px;height:3.5px;background:#d5864a"></div>
 <!-- lower right building -->
 <div class="a" style="left:188px;top:267px;width:72px;height:101px;background:#d78c4c"></div>
 <div class="a" style="left:200px;top:294px;width:22px;height:39px;background:#2e6178"></div>
 <div class="a" style="left:226.5px;top:294px;width:22px;height:39px;background:#2e6178"></div>
 <div class="a" style="left:204.5px;top:313.5px;width:13px;height:19.5px;background:#6fa3a0"></div>
 <div class="a" style="left:231px;top:313.5px;width:13px;height:19.5px;background:#6fa3a0"></div>
 <div class="a" style="left:192.5px;top:333px;width:62.5px;height:9px;background:#e99b61"></div>
 <!-- blue ruler -->
 <svg style="left:258px;top:300px" width="32" height="69" viewBox="0 0 32 69"><defs><linearGradient id="bg1" x1="0" y1="0" x2="0.3" y2="1"><stop offset="0" stop-color="#3f93ea"/><stop offset="1" stop-color="#2b6fd8"/></linearGradient></defs><path fill="#f2c84b" d="M2 7l4-2 1 5-4 1z"/><path fill="#a6c65a" d="M4 6l14-2 2 6-15 2z"/><path fill="url(#bg1)" d="M3 11.5l17-.8 9 58.3H3z"/><rect x="5" y="28" width="12" height="5.5" rx="1.5" fill="#fff" transform="rotate(35 11 30.75)"/><g stroke="#fff" stroke-width="1.3"><path d="M4 51l3 2M5 55l3 2M6 59l3 2M7 63l3 2"/></g></svg>
 <!-- tree -->
 <svg style="left:277px;top:259px" width="31" height="110" viewBox="0 0 31 110"><rect x="13" y="90" width="4" height="20" fill="#a8784c"/><path fill="#8db853" d="M15 0C21 12 30 40 30 62c0 18-6 30-15 30S0 80 0 62C0 40 9 12 15 0z"/><path fill="#7a9a48" d="M15 0C9 12 0 40 0 62c0 18 6 30 15 30z"/></svg>
 <div class="a" style="left:49px;top:365px;width:262px;height:3px;background:#79a94a"></div>
 <!-- selection frame -->
 <div class="a" style="left:43.5px;top:144.5px;width:1.3px;height:230px;background:#666"></div>
 <div class="a" style="left:310.6px;top:144.5px;width:1.3px;height:230px;background:#666"></div>
 <div class="a" style="left:43.5px;top:144.3px;width:268px;height:1.3px;background:#666"></div>
 <div class="a" style="left:173px;top:140.5px;width:9px;height:9px;border-radius:50%;background:#fff;border:1.4px solid #3a3a3a"></div>
 <div class="a" style="left:307px;top:140.5px;width:9px;height:9px;border-radius:50%;background:#fff;border:1.4px solid #3a3a3a"></div>
 <div class="a" style="left:39.5px;top:255.5px;width:9px;height:9px;border-radius:50%;background:#fff;border:1.4px solid #3a3a3a"></div>
 <div class="a" style="left:307px;top:255.5px;width:9px;height:9px;border-radius:50%;background:#fff;border:1.4px solid #3a3a3a"></div>
 <div class="a" style="left:182px;top:259px;width:15px;height:1.5px;background:#333"></div>
 <div class="a" style="left:196px;top:255.5px;width:9px;height:9px;border-radius:50%;background:#fff;border:1.4px solid #3a3a3a"></div>
 <svg style="left:170.5px;top:253px" width="14" height="14" viewBox="0 0 14 14"><circle cx="7" cy="7" r="6" fill="#e99b61" stroke="#333" stroke-width="1.3"/><path stroke="#333" stroke-width="1.3" d="M4.3 4.3l5.4 5.4M9.7 4.3l-5.4 5.4"/></svg>
</div>

<!-- ============ PLAYER ============ -->
<div class="a" style="left:0;top:459px;width:1172px;height:54px;background:#1f2226"></div>
<div class="a" style="left:0;top:513px;width:1172px;height:1.5px;background:#141618"></div>
<div class="a" style="left:252.3px;top:474px;width:24.6px;height:24.6px;border-radius:50%;background:#2a2e33"></div>
<div class="a" style="left:285.5px;top:474px;width:24.6px;height:24.6px;border-radius:50%;background:#2a2e33"></div>
<div class="a" style="left:321.5px;top:466.6px;width:39.4px;height:39.4px;border-radius:50%;background:#2b2f34"></div>
<div class="a" style="left:372px;top:474px;width:24.6px;height:24.6px;border-radius:50%;background:#2a2e33"></div>
<div class="a" style="left:405.3px;top:474px;width:24.6px;height:24.6px;border-radius:50%;background:#2a2e33"></div>
<svg style="left:256px;top:479px" width="16" height="15" viewBox="0 0 16 15"><path fill="#8c8f94" d="M1 7.5L9 1.5v12z"/><rect x="11" y="1.5" width="3" height="12" rx="1" fill="#8c8f94"/></svg>
<svg style="left:291px;top:479px" width="16" height="15" viewBox="0 0 16 15"><rect x="1" y="1.5" width="3" height="12" rx="1" fill="#b9bcc0"/><path fill="#b9bcc0" d="M15 7.5L6 1.5v12z"/></svg>
<svg style="left:332px;top:475px" width="22" height="24" viewBox="0 0 22 24"><path fill="#b9bcc0" d="M2 2.5c0-1.5 1.2-2.2 2.5-1.4L20 10.5c1.3.8 1.3 2.2 0 3L4.5 22.9C3.2 23.7 2 23 2 21.5z"/></svg>
<svg style="left:380px;top:480px" width="8" height="13" viewBox="0 0 8 13"><path fill="none" stroke="#707378" stroke-width="2.6" d="M6.5 1.5l-5 5 5 5"/></svg>
<svg style="left:414px;top:480px" width="8" height="13" viewBox="0 0 8 13"><path fill="none" stroke="#b9bcc0" stroke-width="2.6" d="M1.5 1.5l5 5-5 5"/></svg>
<div class="a" style="left:451px;top:483px;width:326px;height:6.5px;border-radius:3px;background:#3a4045"></div>
<div class="a" style="left:448.9px;top:481px;width:10.6px;height:10.6px;border-radius:50%;background:#fff"></div>
<div class="t" style="left:801px;top:480px;font-size:13px;color:#cfd0d2;letter-spacing:0.3px">00:00/00:42</div>
<div class="a" style="left:1107px;top:474.5px;width:54px;height:25.5px;border-radius:3px;background:#393d43"></div>
<svg style="left:1112.5px;top:480.8px" width="13" height="13" viewBox="0 0 15 15"><path fill="#d4d4d4" d="M6.2 0h2.6l.4 2.1 1.3.6 1.8-1.2 1.8 1.8-1.2 1.8.6 1.3 2.1.4v2.6l-2.1.4-.6 1.3 1.2 1.8-1.8 1.8-1.8-1.2-1.3.6-.4 2.1H6.2l-.4-2.1-1.3-.6-1.8 1.2-1.8-1.8 1.2-1.8-.6-1.3L0 8.8V6.2l2.1-.4.6-1.3L1.5 2.7l1.8-1.8 1.8 1.2 1.3-.6z"/><circle cx="7.5" cy="7.5" r="2.5" fill="#393d43"/></svg>
<div class="t" style="left:1133px;top:481px;font-size:11.5px;font-weight:bold;color:#d0d2d4">属性</div>

<!-- ============ TIMELINE TOOLBAR ============ -->
<div class="a" style="left:0;top:514.5px;width:1172px;height:22px;background:#23262a"></div>
<div class="a" style="left:0;top:536.2px;width:1172px;height:1px;background:#141618"></div>
<div class="a" style="left:23.5px;top:515px;width:1px;height:21px;background:#1a1c1f"></div>
<div class="a" style="left:48px;top:515px;width:1px;height:21px;background:#1a1c1f"></div>
<div class="a" style="left:72px;top:515px;width:1px;height:21px;background:#1a1c1f"></div>
<div class="a" style="left:97px;top:515px;width:1px;height:21px;background:#1a1c1f"></div>
<div class="a" style="left:121px;top:515px;width:1px;height:21px;background:#1a1c1f"></div>
<div class="a" style="left:146px;top:515px;width:1px;height:21px;background:#1a1c1f"></div>
<svg style="left:6px;top:519px" width="13" height="13" viewBox="0 0 13 13"><path fill="none" stroke="#c9cbce" stroke-width="2" d="M11.5 12.5V8.5c0-2.5-2-4-4.5-4H2"/><path fill="#c9cbce" d="M0 4.5L4.5 0v9z"/></svg>
<svg style="left:30px;top:519px" width="13" height="13" viewBox="0 0 13 13"><path fill="none" stroke="#4c4f54" stroke-width="2" d="M1.5 12.5V8.5c0-2.5 2-4 4.5-4H11"/><path fill="#4c4f54" d="M13 4.5L8.5 0v9z"/></svg>
<svg style="left:54px;top:519px" width="14" height="14" viewBox="0 0 14 14"><path stroke="#c9cbce" stroke-width="1.4" d="M3.5 0l6.5 9.5M10.5 0L4 9.5"/><circle cx="3.5" cy="11" r="2.4" fill="none" stroke="#c9cbce" stroke-width="1.2"/><circle cx="10.5" cy="11" r="2.4" fill="none" stroke="#c9cbce" stroke-width="1.2"/></svg>
<svg style="left:78px;top:519px" width="14" height="14" viewBox="0 0 14 14"><path fill="none" stroke="#8c8f94" stroke-width="1.2" d="M1 11V2.5C1 1.6 1.6 1 2.5 1H11"/><rect x="3" y="3" width="10" height="10" rx="1" fill="#c9cbce"/><path stroke="#23262a" stroke-width="1.1" d="M5 6h6M5 8.3h6M5 10.6h6"/></svg>
<svg style="left:103px;top:518px" width="13" height="15" viewBox="0 0 13 15"><path fill="#8c8f94" d="M3 3h6v10H3z"/><path fill="#c9cbce" d="M3.5 2.5L6 0l2.5 2.5z"/><rect x="1" y="3" width="8" height="10" fill="#9a9da2"/><rect x="6" y="7" width="7" height="8" fill="#c9cbce"/><path stroke="#23262a" d="M7.5 10h4M7.5 12h4"/></svg>
<svg style="left:126px;top:519px" width="15" height="13" viewBox="0 0 15 13"><rect x="0" y="1.5" width="5.5" height="10" fill="#44474c"/><rect x="9.5" y="1.5" width="5.5" height="10" fill="#44474c"/><rect x="7" y="0" width="1" height="13" fill="#44474c"/></svg>
<svg style="left:154px;top:521px" width="11" height="10" viewBox="0 0 11 10"><circle cx="4" cy="4" r="3.1" fill="none" stroke="#c9cbce" stroke-width="1.6"/><path stroke="#c9cbce" stroke-width="2" d="M6.3 6.3L10 9.5"/></svg>
<div class="a" style="left:178.5px;top:525px;width:9px;height:1.8px;background:#c9cbce"></div>
<div class="a" style="left:197px;top:523px;width:93px;height:5px;border-radius:2.5px 0 0 2.5px;background:#3a3e44"></div>
<div class="a" style="left:289px;top:523px;width:52px;height:5px;border-radius:0 2.5px 2.5px 0;background:#17191c"></div>
<div class="a" style="left:283.5px;top:521px;width:9px;height:9px;border-radius:50%;background:#b2b5ba"></div>
<svg style="left:350px;top:521px" width="9" height="10" viewBox="0 0 9 10"><path stroke="#c9cbce" stroke-width="1.8" d="M4.5 0.5v9M0 5h9"/></svg>

<!-- ============ RULER ============ -->
<div class="a" style="left:0;top:537px;width:1172px;height:38.5px;background:#202327"></div>
<div class="a" style="left:93px;top:537px;width:1079px;height:11px;background:#111315"></div>
<div class="a" style="left:0;top:537px;width:72.5px;height:38.5px;background:#23262a"></div>
<div class="a" style="left:9px;top:541px;width:3.4px;height:23px;border-radius:2px;background:#15171a"></div>
<div class="a" style="left:7.3px;top:562.5px;width:6px;height:6px;border-radius:50%;background:#c8cacd"></div>
<svg style="left:23px;top:546px" width="8" height="21" viewBox="0 0 8 21"><path fill="#6a6d72" d="M4 0l2.5 3h-5zM4 21l2.5-3h-5z"/><circle cx="3.5" cy="9.5" r="2.2" fill="none" stroke="#6a6d72" stroke-width="1"/><path stroke="#6a6d72" stroke-width="1.1" d="M5 11l2.5 2.5"/></svg>
<div class="a" style="left:40.6px;top:539.6px;width:29.4px;height:15.8px;border-radius:3px;background:#2a2d32"></div>
<div class="a" style="left:40.6px;top:557.5px;width:29.4px;height:15.3px;border-radius:3px;background:#2a2d32"></div>
<svg style="left:50px;top:542px" width="10" height="10" viewBox="0 0 10 10"><path stroke="#e6e6e6" stroke-width="1.8" d="M5 0v10M0 5h10"/></svg>
<svg style="left:50px;top:562px" width="10" height="7" viewBox="0 0 10 7"><path fill="none" stroke="#e6e6e6" stroke-width="1.8" d="M1 1l4 4 4-4"/></svg>
<div class="t" style="left:98.6px;top:538.5px;font-size:9.3px;color:#c4c6c9">0:00:00;00</div>
<svg style="left:73px;top:548px" width="1099" height="15" viewBox="0 0 1099 15"><defs><pattern id="tk" x="0" y="0" width="7.895" height="15" patternUnits="userSpaceOnUse"><rect x="0" y="1.5" width="1" height="9" fill="#33363b"/></pattern><pattern id="tk2" x="0" y="0" width="39.48" height="15" patternUnits="userSpaceOnUse"><rect x="0" y="0" width="1" height="14" fill="#3b3e43"/></pattern></defs><rect width="1099" height="15" fill="url(#tk)"/><rect width="1099" height="15" fill="url(#tk2)"/></svg>
<div class="t" style="left:74px;top:563.5px;font-size:9.3px;color:#b9bbbe">0:00:00;00</div>
<div class="t" style="left:271.4px;top:563.5px;font-size:9.3px;color:#b9bbbe">0:00:05;00</div>
<div class="t" style="left:468.8px;top:563.5px;font-size:9.3px;color:#b9bbbe">0:00:10;00</div>
<div class="t" style="left:666.2px;top:563.5px;font-size:9.3px;color:#b9bbbe">0:00:15;00</div>
<div class="t" style="left:863.6px;top:563.5px;font-size:9.3px;color:#b9bbbe">0:00:20;00</div>
<div class="t" style="left:1061px;top:563.5px;font-size:9.3px;color:#b9bbbe">0:00:25;00</div>

<!-- ============ TRACKS ============ -->
<div class="a" style="left:0;top:575.5px;width:1172px;height:167.5px;background:#1a1c1f"></div>
<div class="a" style="left:0;top:575.5px;width:72px;height:167.5px;background:#2b2f34"></div>
<div class="a" style="left:0;top:655px;width:1172px;height:1.2px;background:#202327"></div>
<div class="a" style="left:0;top:656.2px;width:72px;height:42px;background:#2d3137"></div>
<div class="a" style="left:0;top:698.2px;width:1172px;height:1.8px;background:#1e2124"></div>
<div class="a" style="left:73px;top:700px;width:1099px;height:40px;background:#2e3237"></div>
<div class="a" style="left:0;top:700px;width:72px;height:40px;background:#2d3137"></div>
<div class="a" style="left:0;top:740px;width:1172px;height:3px;background:#141618"></div>
<div class="t" style="left:9px;top:672px;font-size:10.8px;font-weight:bold;color:#b6b9bd">轨道 2</div>
<div class="t" style="left:9px;top:715px;font-size:10.8px;font-weight:bold;color:#b6b9bd">轨道 1</div>
<svg style="left:55px;top:663.5px" width="12" height="7" viewBox="0 0 12 7"><path fill="#1c1e21" d="M0 3.5C2 1 4 0 6 0s4 1 6 3.5C10 6 8 7 6 7S2 6 0 3.5z"/><circle cx="6" cy="3.5" r="1.8" fill="#2d3137"/></svg>
<svg style="left:56.5px;top:681px" width="9" height="12" viewBox="0 0 9 12"><path fill="none" stroke="#1c1e21" stroke-width="1.4" d="M2 5V3a2.5 2.5 0 015 0"/><rect x="0.5" y="5" width="8" height="7" fill="#1c1e21"/></svg>
<svg style="left:55px;top:706.5px" width="12" height="7" viewBox="0 0 12 7"><path fill="#1c1e21" d="M0 3.5C2 1 4 0 6 0s4 1 6 3.5C10 6 8 7 6 7S2 6 0 3.5z"/><circle cx="6" cy="3.5" r="1.8" fill="#2d3137"/></svg>
<svg style="left:56.5px;top:724px" width="9" height="12" viewBox="0 0 9 12"><path fill="none" stroke="#1c1e21" stroke-width="1.4" d="M2 5V3a2.5 2.5 0 015 0"/><rect x="0.5" y="5" width="8" height="7" fill="#1c1e21"/></svg>
<!-- clips -->
<div class="a" style="left:73.2px;top:657.5px;width:195.6px;height:39.3px;border-radius:6px;background:#272b30;border:1.5px solid #c7a35a"></div>
<svg style="left:77.5px;top:662px" width="34" height="30" viewBox="0 0 34 30"><rect x="1" y="1" width="18" height="28" fill="#e99b61"/><rect x="0" y="0" width="19" height="1.5" fill="#c97c40"/><g fill="#2e6178"><rect x="4" y="4" width="4" height="4"/><rect x="11" y="4" width="4" height="4"/><rect x="4" y="12" width="4" height="4"/><rect x="11" y="12" width="4" height="4"/></g><rect x="7" y="20" width="4" height="9" fill="#8a6b50"/><rect x="19" y="14" width="9" height="15" fill="#d78c4c"/><rect x="19" y="12" width="11" height="2" fill="#ddd"/><rect x="21" y="18" width="6" height="5" fill="#2e6178"/><path fill="#eee" d="M21 8a2 2 0 014-.5 1.5 1.5 0 012.5 1.5H21z"/><path fill="#8db853" d="M30 29v-9c1-4 3-4 4 0v9z"/><rect x="0" y="28.5" width="34" height="1.5" fill="#79a94a"/></svg>
<div class="t" style="left:119px;top:671px;font-size:13.6px;color:#f0f0f0;-webkit-text-stroke:0.3px #f0f0f0">Apartment-02</div>
<div class="a" style="left:682px;top:657.3px;width:196.5px;height:39px;border-radius:6px;background:#2c3036"></div>
<svg style="left:686.5px;top:662px" width="34" height="30" viewBox="0 0 34 30"><path fill="#7f8084" d="M1 0h27l2 4H0z"/><rect x="2" y="4" width="25" height="24" fill="#e99b61"/><rect x="2" y="14" width="25" height="1.5" fill="#c97c40"/><g fill="#2e6178"><rect x="5" y="7" width="4" height="4"/><rect x="12" y="7" width="4" height="4"/><rect x="19" y="7" width="4" height="4"/><rect x="5" y="18" width="4" height="4"/><rect x="19" y="18" width="4" height="4"/></g><rect x="12" y="20" width="5" height="8" fill="#8a6b50"/><circle cx="30" cy="22" r="4.5" fill="#8ec456"/><rect x="0" y="28" width="32" height="1.5" fill="#79a94a"/></svg>
<div class="t" style="left:728px;top:671px;font-size:13.6px;color:#f0f0f0;-webkit-text-stroke:0.3px #f0f0f0">Apartment-01</div>
<svg style="left:77.5px;top:705.5px" width="52" height="28" viewBox="0 0 52 28"><rect width="52" height="28" fill="#f4f4f4"/><rect y="0" width="52" height="2" fill="#ddd"/><rect y="4" width="52" height="1.2" fill="#4fa88a"/><rect x="20" y="6" width="11" height="8" fill="#0f2430"/><text x="21.5" y="12.5" font-size="6" fill="#5dcaf4" font-family="Liberation Sans">Ps</text><rect x="9" y="7" width="8" height="10" fill="#e4e4e4"/><rect x="35" y="7" width="8" height="10" fill="#e4e4e4"/><rect x="15" y="17" width="6" height="6" fill="#3a7bd5"/><rect x="22" y="17" width="6" height="6" fill="#2e6c3f"/><rect x="29" y="17" width="6" height="6" fill="#e4453a"/><circle cx="38.5" cy="20" r="3" fill="#ee8a2c"/><rect y="25.5" width="52" height="2.5" fill="#b88a55"/></svg>
<div class="t" style="left:136px;top:714px;font-size:13.4px;color:#f0f0f0;-webkit-text-stroke:0.3px #f0f0f0">录制 2018-11-9</div>
<!-- playhead -->
<div class="a" style="left:72.3px;top:555px;width:1.5px;height:185px;background:#d0d2d4"></div>
<svg style="left:73px;top:536.7px" width="21" height="20" viewBox="0 0 21 20"><path fill="#8fa5a8" d="M0 0h12v11.5L1.2 19.4H0z"/><rect x="12" y="0" width="8.2" height="11.4" rx="1" fill="#c23a31"/></svg>

<!-- ============ MENU ============ -->
<div class="a" style="left:319px;top:20px;width:167.5px;height:293.5px;border-radius:0 0 5px 5px;overflow:hidden;box-shadow:0 3px 9px rgba(0,0,0,0.3)"><div class="a" style="left:-40px;top:-40px;width:248px;height:374px;filter:blur(16px) saturate(1.6)"><div class="a" style="left:0px;top:0px;width:248px;height:374px;background:#1f2226"></div><div class="a" style="left:0px;top:0px;width:248px;height:60px;background:#151516"></div><div class="a" style="left:0px;top:94px;width:78px;height:280px;background:#282b30"></div><div class="a" style="left:0px;top:260px;width:78px;height:35px;background:#3a3e44"></div><div class="a" style="left:78px;top:94px;width:10px;height:280px;background:#000"></div><div class="a" style="left:78px;top:94px;width:170px;height:17px;background:#000"></div><div class="a" style="left:88px;top:111px;width:160px;height:42px;background:#e4e6ea"></div><div class="a" style="left:88px;top:153px;width:160px;height:221px;background:#fff"></div><div class="a" style="left:88px;top:179.5px;width:160px;height:22.19999999999999px;background:#50a98a"></div><div class="a" style="left:137px;top:256px;width:111px;height:118px;background:#e99b61"></div><div class="a" style="left:137px;top:256px;width:111px;height:9.599999999999994px;background:#d88a4c"></div><div class="a" style="left:161px;top:287px;width:30px;height:49px;background:#3a6f82"></div><div class="a" style="left:221px;top:287px;width:27px;height:49px;background:#3a6f82"></div><div class="a" style="left:161px;top:351px;width:30px;height:23px;background:#3a6f82"></div><div class="a" style="left:221px;top:351px;width:27px;height:23px;background:#3a6f82"></div></div><div class="a" style="left:0;top:0;width:167.5px;height:293.5px;background:rgba(226,227,228,0.85)"></div></div>
<div class="a" style="left:319px;top:45.8px;width:167.5px;height:1px;background:rgba(140,140,140,0.38)"></div>
<div class="a" style="left:319px;top:73.6px;width:167.5px;height:1px;background:rgba(140,140,140,0.38)"></div>
<div class="a" style="left:319px;top:152.8px;width:167.5px;height:1px;background:rgba(140,140,140,0.28)"></div>
<div class="a" style="left:319px;top:197.5px;width:167.5px;height:1px;background:rgba(140,140,140,0.28)"></div>
<div class="a" style="left:319px;top:242.3px;width:167.5px;height:1px;background:rgba(140,140,140,0.28)"></div>
<div class="a" style="left:319px;top:287.3px;width:167.5px;height:1px;background:rgba(140,140,140,0.28)"></div>
<div style="position:absolute;left:0;top:0;color:#1e1e1e;font-size:13px;-webkit-text-stroke:0.25px #1e1e1e">
<svg style="left:324px;top:27.5px" width="11" height="10" viewBox="0 0 11 10"><path fill="none" stroke="#1e1e1e" stroke-width="1.9" stroke-linejoin="round" d="M1 5.2l3 3.6L10 1"/></svg>
<div class="t" style="left:338px;top:25px">显示工具面板</div>
<div class="t" style="left:458px;top:25px">⌘1</div>
<div class="t" style="left:338px;top:53px">工具</div>
<div class="t" style="left:467px;top:54px;font-size:10.5px">▶</div>
<div class="t" style="left:338px;top:81px">显示属性</div>
<div class="t" style="left:458px;top:81px">⌘2</div>
<div class="t" style="left:338px;top:98px">显示标记轨道</div>
<div class="t" style="left:459px;top:98px">^ M</div>
<div class="t" style="left:338px;top:115px">显示测验轨道</div>
<div class="t" style="left:459px;top:115px">^ Q</div>
<div class="t" style="left:338px;top:132px">显示字幕轨道</div>
<div class="t" style="left:338px;top:160px">画布</div>
<div class="t" style="left:467px;top:161px;font-size:10.5px">▶</div>
<div class="t" style="left:338px;top:177px">时间轴</div>
<div class="t" style="left:467px;top:178px;font-size:10.5px">▶</div>
<svg style="left:324px;top:207.5px" width="11" height="10" viewBox="0 0 11 10"><path fill="none" stroke="#1e1e1e" stroke-width="1.9" stroke-linejoin="round" d="M1 5.2l3 3.6L10 1"/></svg>
<div class="t" style="left:338px;top:205px">开启画布对齐</div>
<div class="t" style="left:457px;top:205px">⌘;</div>
<svg style="left:324px;top:224.5px" width="11" height="10" viewBox="0 0 11 10"><path fill="none" stroke="#1e1e1e" stroke-width="1.9" stroke-linejoin="round" d="M1 5.2l3 3.6L10 1"/></svg>
<div class="t" style="left:338px;top:222px">开启时间轴对齐</div>
<div class="t" style="left:445px;top:222px">⇧⌘;</div>
<div class="t" style="left:338px;top:250px">显示</div>
<div class="t" style="left:467px;top:251px;font-size:10.5px">▶</div>
<svg style="left:324px;top:269.5px" width="11" height="10" viewBox="0 0 11 10"><path fill="none" stroke="#1e1e1e" stroke-width="1.9" stroke-linejoin="round" d="M1 5.2l3 3.6L10 1"/></svg>
<div class="t" style="left:338px;top:267px">在预览中显示字幕</div>
<div class="t" style="left:338px;top:295px">进入全屏幕</div>
<div class="t" style="left:445px;top:295px">⇧⌘F</div>
</div>
<!-- cursor -->
<svg style="left:339px;top:7px" width="12" height="17" viewBox="0 0 12 17"><path fill="#111" stroke="#fff" stroke-width="1" d="M1 1v13.5l3.3-3.2 2.3 5 2-.9-2.2-4.9H11z"/></svg>


</body></html>
